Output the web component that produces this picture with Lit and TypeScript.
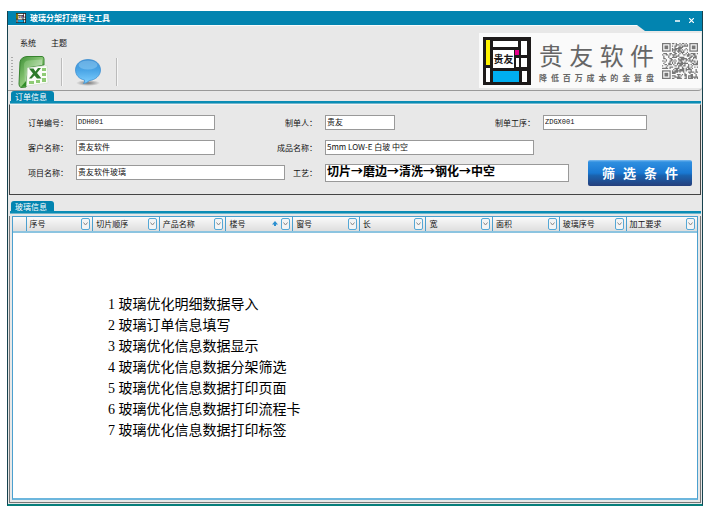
import { LitElement, html, css, svg } from "lit";
import { customElement } from "lit/decorators.js";

interface Field {
  id: string;
  label: string;
  value: string;
  kind?: string;
}

const FIELDS: Field[] = [
  { id: "order", label: "订单编号：", value: "DDH001", kind: "code" },
  { id: "maker", label: "制单人：", value: "贵友" },
  { id: "process", label: "制单工序：", value: "ZDGX001", kind: "code" },
  { id: "customer", label: "客户名称：", value: "贵友软件" },
  { id: "product", label: "成品名称：", value: "5mm LOW-E 白玻 中空" },
  { id: "project", label: "项目名称：", value: "贵友软件玻璃" },
  { id: "craft", label: "工艺：", value: "切片→磨边→清洗→钢化→中空", kind: "large" },
];

const COLUMNS = ["序号", "切片顺序", "产品名称", "楼号", "窗号", "长", "宽", "面积", "玻璃序号", "加工要求"];
const SORTED = "楼号";

const NOTES = [
  "玻璃优化明细数据导入",
  "玻璃订单信息填写",
  "玻璃优化信息数据显示",
  "玻璃优化信息数据分架筛选",
  "玻璃优化信息数据打印页面",
  "玻璃优化信息数据打印流程卡",
  "玻璃优化信息数据打印标签",
];

const QR_SIZE = 29;

function qrPath(): string {
  let seed = 41;
  let d = "";
  const last = QR_SIZE - 8;
  for (let y = 0; y < QR_SIZE; y++) {
    for (let x = 0; x < QR_SIZE; x++) {
      seed = (seed * 1103515245 + 12345) % 2147483648;
      const finder = (x < 8 && y < 8) || (x >= last && y < 8) || (x < 8 && y >= last);
      if (!finder && (seed >> 12) % 100 < 53) d += `M${x} ${y}h1v1h-1z`;
    }
  }
  return d;
}

const finder = (x: number, y: number) => svg`
  <rect x=${x + 0.5} y=${y + 0.5} width="6" height="6" fill="none" stroke="#777"></rect>
  <rect x=${x + 2} y=${y + 2} width="3" height="3" fill="#777"></rect>`;

const mosaic = (label: string) => html`
  <svg class="mosaic" viewBox="0 0 48 48" role="img" aria-label="贵友">
    <rect width="48" height="48" fill="#1d1a1a"></rect>
    <rect x="3" y="3" width="4" height="25" fill="#fff200"></rect>
    <rect x="3" y="31" width="4" height="14" fill="#fff"></rect>
    <rect x="10" y="4" width="25" height="6" fill="#fff"></rect>
    <rect x="38" y="4" width="6" height="14" fill="#fff"></rect>
    <rect x="10" y="13" width="21" height="18" fill="#fff"></rect>
    <rect x="32" y="13" width="4" height="5" fill="#e6008c"></rect>
    <rect x="33" y="21" width="3" height="9" fill="#fff"></rect>
    <rect x="38" y="21" width="6" height="9" fill="#fff"></rect>
    <rect x="10" y="34" width="26" height="11" fill="#00aef0"></rect>
    <rect x="39" y="34" width="5" height="11" fill="#fff"></rect>
    <text x="20.500" y="26" text-anchor="middle" font-size="10" font-weight="700"
      font-family="'Noto Sans CJK SC', sans-serif" fill="#1d1a1a">${label}</text>
  </svg>`;

const excelIcon = html`
  <svg viewBox="0 0 32 34" width="32" height="34" aria-hidden="true">
    <defs>
      <linearGradient id="xl" x1="0" y1="0" x2="1" y2="1">
        <stop offset="0" stop-color="#3d8f35"></stop>
        <stop offset="0.5" stop-color="#8cc878"></stop>
        <stop offset="1" stop-color="#2f8a2a"></stop>
      </linearGradient>
      <linearGradient id="xi" x1="0" y1="0" x2="1" y2="1">
        <stop offset="0" stop-color="#6fb660"></stop>
        <stop offset="1" stop-color="#e4f3dc"></stop>
      </linearGradient>
    </defs>
    <path d="M2 7Q3 2 9 1.500H24Q26 1.500 26 4V10L12 12L8 32L3 32.500Q1 32 1 29Z" fill="url(#xl)" stroke="#37832f"></path>
    <path d="M6 10Q6 6 10 5.500L24 4.500V10L11 12L7 30Z" fill="url(#xi)"></path>
    <path d="M3 32L8 26L10 13L9 31Z" fill="#2f8d27"></path>
    <path d="M9.500 13L29 10.500L30 28L8.500 31Z" fill="#fbfdf9" stroke="#cfdccb" stroke-width=".6"></path>
    <path d="M11 13.500H15.500L17.500 16.500L20 13H23L19 18L23.500 23.500H19L16.500 20.500L13.500 23.500H11L15 18.500Z" fill="#2d7a2c"></path>
    <g fill="#8fcb75">
      <rect x="24" y="13" width="4" height="3"></rect><rect x="24" y="18" width="4" height="3"></rect>
      <rect x="24" y="23" width="4" height="4"></rect><rect x="18" y="25" width="4" height="3"></rect>
      <rect x="11" y="26" width="5" height="3"></rect>
    </g>
  </svg>`;

const bubbleIcon = html`
  <svg viewBox="0 0 28 28" width="28" height="28" aria-hidden="true">
    <defs>
      <linearGradient id="bb" x1="0" y1="0" x2="0" y2="1">
        <stop offset="0" stop-color="#3c8fd4"></stop>
        <stop offset="0.45" stop-color="#4aa5e6"></stop>
        <stop offset="1" stop-color="#7fd0ff"></stop>
      </linearGradient>
      <radialGradient id="sh">
        <stop offset="0" stop-color="#777"></stop>
        <stop offset="1" stop-color="#777" stop-opacity="0"></stop>
      </radialGradient>
    </defs>
    <ellipse cx="14" cy="25" rx="12" ry="3" fill="url(#sh)"></ellipse>
    <path d="M14 1.500C21.500 1.500 26.500 6 26.500 12C26.500 18 21 22 15.500 22.500Q13 25 9.500 25.500Q11 24 10.500 22C5 21 1.500 17 1.500 12C1.500 6 6.500 1.500 14 1.500Z" fill="url(#bb)" stroke="#3589cf" stroke-width=".7"></path>
    <ellipse cx="14" cy="7" rx="9.500" ry="4.500" fill="#a8dcfb" opacity=".4"></ellipse>
  </svg>`;

@customElement("app-root")
export class AppRoot extends LitElement {
  static styles = css`
    :host {
      display: flex;
      box-sizing: border-box;
      min-height: 100vh;
      padding: 11px 6px 24px 7px;
      background: #fff;
      color: #111;
      font: 8px/12px "Noto Sans CJK SC", sans-serif;
    }
    * { box-sizing: border-box; }
    button, input { font: inherit; color: inherit; margin: 0; }
    button { padding: 0; border: 0; background: none; white-space: nowrap; }
    .window {
      flex: 1;
      min-width: 0;
      display: flex;
      flex-direction: column;
      background: #e8e8e8;
      border: 1px solid #17424e;
      border-top: 0;
      border-bottom: 2px solid #087f7c;
    }
    .titlebar {
      position: relative;
      height: 15px;
      display: flex;
      align-items: center;
      gap: 4px;
      padding: 0 6px 0 8px;
      background: #0284b0;
      border-bottom: 1px solid #f8fbfc;
      color: #fff;
    }
    .titlebar::after {
      content: "";
      position: absolute;
      right: 0;
      top: 14px;
      width: 65px;
      height: 6px;
      background: #0284b0;
      clip-path: polygon(0 0, 100% 0, 100% 100%, 8px 100%);
    }
    .title { flex: 1; margin: 0; font: inherit; font-weight: 700; }
    .titlebar .mosaic { width: 10px; height: 10px; }
    .control { position: relative; z-index: 1; width: 10px; height: 10px; margin-top: 5px; display: grid; place-items: center; }
    .header {
      display: flex;
      justify-content: space-between;
      height: 65px;
      border-bottom: 1px solid #999;
      border-radius: 0 0 4px 0;
    }
    .menu { display: flex; gap: 15px; padding: 11px 0 0 12px; }
    .toolbar { display: flex; align-items: center; height: 34px; margin-top: 6px; padding-left: 3px; }
    .grip { width: 2px; height: 30px; background: repeating-linear-gradient(#aaa 0 1px, transparent 1px 3px); }
    .tool { display: flex; }
    .excel { margin: 0 11px 0 5px; }
    .bubble { margin: 0 14px 0 11px; }
    .rule { width: 2px; height: 28px; border-left: 1px solid #bbb; border-right: 1px solid #f6f6f6; }
    .brand {
      display: flex;
      align-items: center;
      gap: 8px;
      margin: 7px 1px 2px 0;
      padding: 0 3px 0 4px;
      background: #fafafa;
    }
    .brand .mosaic { width: 48px; height: 48px; }
    .words { width: 115px; color: #666; }
    .spread { display: flex; justify-content: space-between; }
    .name { font-size: 24px; line-height: 35px; }
    .slogan { font-size: 8px; line-height: 12px; font-weight: 700; }
    .qr { width: 36px; height: 36px; }
    .tab {
      width: 43px;
      height: 10px;
      margin: 0 0 0 3px;
      padding-left: 4px;
      overflow: hidden;
      background: #0284b0;
      border-radius: 3px 3px 0 0;
      color: #fff;
      font: inherit;
      line-height: 11px;
    }
    .bar { height: 3px; margin: 0 1px 0 2px; background: #0a8cb4; border-bottom: 1px solid #6fb6cd; }
    .form {
      display: grid;
      grid-template-columns: 48px 139fr 70fr 40px 70fr 100fr 39fr 9fr 26fr 19fr 59fr 45fr;
      grid-template-rows: repeat(3, 25px);
      align-items: center;
      margin: 0 1px 6px;
      padding: 5px 8px 9px 18px;
      border: 1px solid #444;
      border-top-color: #f4f4f4;
    }
    label { padding-right: 8px; justify-self: end; white-space: nowrap; line-height: 12px; }
    .text {
      width: 100%;
      min-width: 0;
      height: 15px;
      padding: 0 1px 2px;
      border: 1px solid #999;
      border-radius: 0;
      background: #fff;
      outline: 0;
    }
    .code { font-family: "Liberation Mono", "Noto Sans CJK SC", monospace; font-size: 7px; }
    .large { height: 18px; padding-bottom: 4px; font-size: 12px; font-weight: 700; color: #000; }
    .l-order, .l-customer, .l-project { grid-column: 1; }
    .l-maker, .l-product { grid-column: 3 / 5; }
    .l-craft { grid-column: 4; }
    .l-process { grid-column: 6 / 9; }
    .l-order, .i-order, .l-maker, .i-maker, .l-process, .i-process { grid-row: 1; }
    .l-customer, .i-customer, .l-product, .i-product { grid-row: 2; }
    .l-project, .i-project, .l-craft, .i-craft { grid-row: 3; }
    .i-order, .i-customer { grid-column: 2; }
    .i-project { grid-column: 2 / 4; }
    .i-maker { grid-column: 5; }
    .i-product { grid-column: 5 / 8; }
    .i-craft { grid-column: 5 / 10; }
    .i-process { grid-column: 9 / 12; }
    .filter {
      grid-column: 11 / 13;
      grid-row: 3;
      display: flex;
      justify-content: center;
      align-items: center;
      gap: 8px;
      height: 26px;
      border-radius: 2px;
      background: linear-gradient(#7dbcf0 0, #2f8fe0 8%, #1978d2 50%, #1a62ae 60%, #263f7c 100%);
      color: #fff;
      font-size: 13px;
      font-weight: 700;
    }
    .data {
      flex: 1;
      display: flex;
      flex-direction: column;
      margin: 2px 1px 1px;
      padding: 0 2px 2px;
      border: 1px solid #777;
      border-top: 0;
    }
    .sheet { flex: 1; background: #fff; border: 1px solid #4ba0cf; border-bottom: 2px solid #6cb6dd; }
    table { width: 100%; table-layout: fixed; border-collapse: collapse; }
    th {
      padding: 0 2px 0 3px;
      border-right: 1px solid #4ba0cf;
      border-bottom: 2px solid #8cc4e0;
      background: linear-gradient(#fafafa, #dedede);
      font-weight: 400;
      text-align: left;
    }
    th:last-child { border-right: 0; }
    .mark { width: 13px; }
    .last { width: 71px; }
    .cell { display: flex; align-items: center; gap: 3px; height: 14px; }
    .cell span { flex: 1; }
    .drop {
      display: grid;
      place-items: center;
      width: 9px;
      height: 12px;
      border: 1px solid #55a8d6;
      border-radius: 2px;
      background: #f4f4f4;
    }
    .notes { margin: 61px 0 0 95px; padding: 0; list-style: none; color: #000; font: 14px/21px "Liberation Serif", "Noto Sans CJK SC", serif; }
    .notes li { white-space: pre; height: 21px; }
  `;

  private field(f: Field) {
    return html`
      <label class="l-${f.id}" for=${f.id}>${f.label}</label>
      <input class="text i-${f.id} ${f.kind ?? ""}" id=${f.id} type="text" .value=${f.value} />`;
  }

  private spread(text: string) {
    return [...text].map((c) => html`<span>${c}</span>`);
  }

  render() {
    return html`
      <main class="window">
        <header class="titlebar">
          ${mosaic("贵友")}
          <h1 class="title">玻璃分架打流程卡工具</h1>
          <button class="control" aria-label="最小化">
            <svg width="5" height="6" viewBox="0 0 5 6"><path d="M0 3H5" stroke="#fff" stroke-width="1.500"></path></svg>
          </button>
          <button class="control" aria-label="关闭">
            <svg width="5" height="5" viewBox="0 0 5 5"><path d="M0 0L5 5M5 0L0 5" stroke="#fff" stroke-width="1.200"></path></svg>
          </button>
        </header>
        <div class="header">
          <div>
            <nav class="menu"><button>系统</button><button>主题</button></nav>
            <div class="toolbar">
              <span class="grip"></span>
              <button class="tool excel" aria-label="导入 Excel">${excelIcon}</button>
              <span class="rule"></span>
              <button class="tool bubble" aria-label="消息">${bubbleIcon}</button>
              <span class="rule"></span>
            </div>
          </div>
          <div class="brand">
            ${mosaic("贵友")}
            <div class="words">
              <div class="spread name">${this.spread("贵友软件")}</div>
              <div class="spread slogan">${this.spread("降低百万成本的金算盘")}</div>
            </div>
            <svg class="qr" viewBox="0 0 29 29" role="img" aria-label="二维码">
              <path d=${qrPath()} fill="#777"></path>
              ${finder(0, 0)}${finder(22, 0)}${finder(0, 22)}
            </svg>
          </div>
        </div>
        <h2 class="tab">订单信息</h2>
        <div class="bar"></div>
        <form class="form">
          ${FIELDS.map((f) => this.field(f))}
          <button class="filter" type="button">${this.spread("筛选条件")}</button>
        </form>
        <h2 class="tab">玻璃信息</h2>
        <div class="bar"></div>
        <section class="data">
          <div class="sheet">
            <table>
              <thead>
                <tr>
                  <th class="mark"></th>
                  ${COLUMNS.map(
                    (c, i) => html`
                      <th class=${i === COLUMNS.length - 1 ? "last" : ""} scope="col">
                        <div class="cell">
                          <span>${c}</span>
                          ${c === SORTED
                            ? html`<svg width="6" height="6" viewBox="0 0 6 6"><path d="M0 3.500L3 0L6 3.500H4V5H2V3.500Z" fill="#2b8fd0"></path></svg>`
                            : ""}
                          <button class="drop" aria-label="筛选${c}">
                            <svg width="5" height="4" viewBox="0 0 5 4"><path d="M.5 .5L2.500 3L4.500 .5" fill="none" stroke="#888"></path></svg>
                          </button>
                        </div>
                      </th>`
                  )}
                </tr>
              </thead>
            </table>
            <ol class="notes">${NOTES.map((n, i) => html`<li>${i + 1} ${n}</li>`)}</ol>
          </div>
        </section>
      </main>`;
  }
}
